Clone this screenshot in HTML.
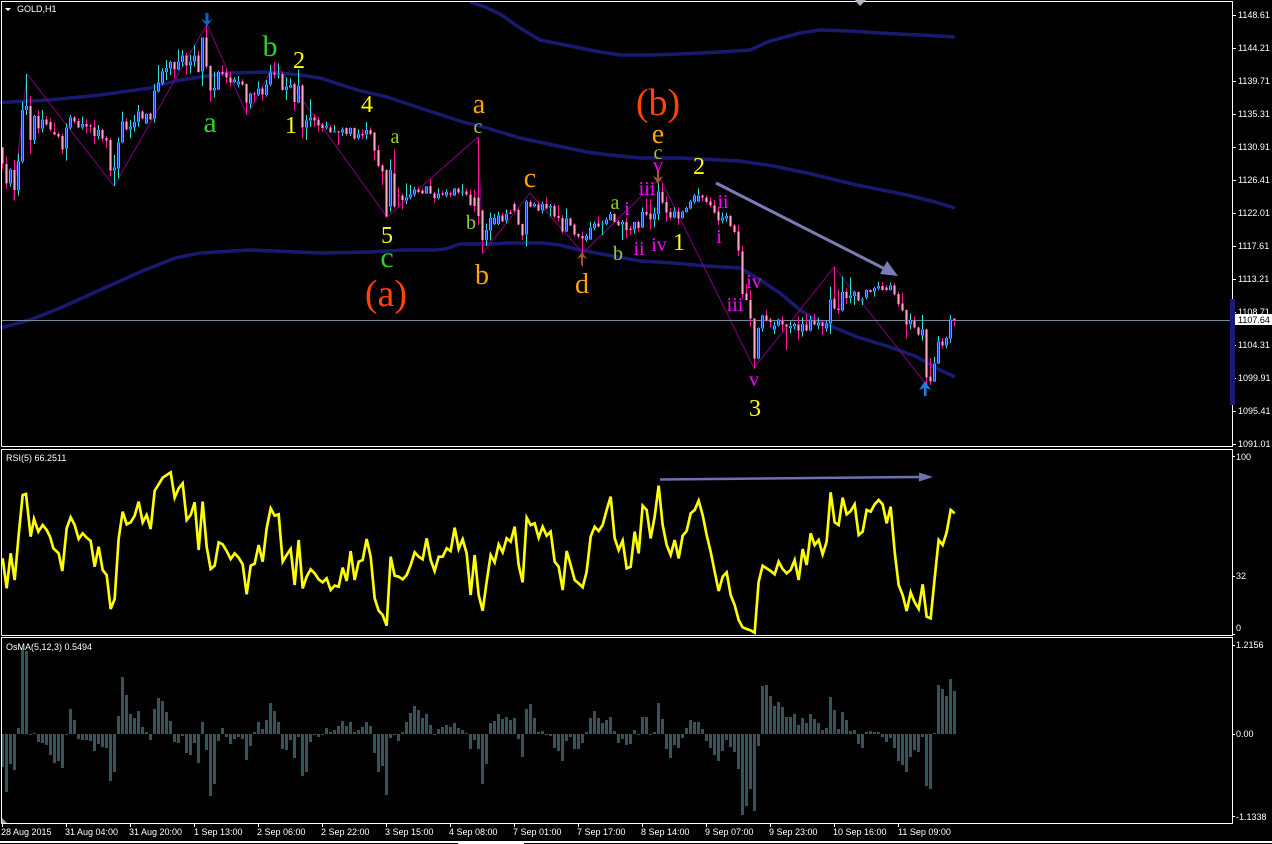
<!DOCTYPE html>
<html><head><meta charset="utf-8"><title>GOLD,H1</title>
<style>html,body{margin:0;padding:0;background:#000;width:1272px;height:844px;overflow:hidden}svg{display:block}
.a{font:9px "Liberation Sans",sans-serif;fill:#fff}
.s{font-family:"Liberation Serif",serif;text-anchor:middle}
</style></head><body>
<svg xmlns="http://www.w3.org/2000/svg" width="1272" height="844" viewBox="0 0 1272 844">
<defs>
<path id="bb1" d="M2.500 442V490M6.500 492V550M14.500 510V570M30.500 318V420M38.500 348V385M46.500 358V373M50.500 366V388M54.500 396V404M58.500 402V410M62.500 408V448M74.500 352V365M78.500 363V382M86.500 372V380M90.500 376V380M94.500 382V408M102.500 390V416M106.500 414V422M110.500 420V512M126.500 364V388M142.500 334V356M150.500 340V358M174.500 186V208M186.500 166V196M198.500 166V216M206.500 112V200M210.500 198V272M222.500 216V222M226.500 218V232M230.500 232V248M242.500 244V254M246.500 252V308M254.500 280V284M262.500 265V284M274.500 218V224M282.500 222V270M294.500 252V306M302.500 256V382M314.500 352V362M318.500 360V376"/>
<path id="ub1" d="M10.500 508V550M18.500 485V570M22.500 330V485M26.500 318V330M34.500 348V420M42.500 358V385M66.500 382V445M70.500 352V382M82.500 372V382M98.500 390V408M114.500 502V512M118.500 428V505M122.500 364V428M130.500 380V388M134.500 366V382M138.500 334V366M146.500 342V370M154.500 272V356M158.500 248V275M162.500 214V250M166.500 204V216M170.500 186V206M178.500 184V208M182.500 166V186M190.500 184V196M194.500 166V184M202.500 112V214M214.500 264V272M218.500 216V268M234.500 238V246M238.500 244V254M250.500 280V310M258.500 265V284M266.500 254V285M270.500 218V254M278.500 220V224M286.500 260V270M290.500 255V262M298.500 258V308M306.500 362V382M310.500 352V362"/>
<path id="bb2" d="M322.500 104V114M330.500 112V127M338.500 124V128M346.500 114V132M354.500 114V146M362.500 132V136M370.500 120V132M374.500 128V182M378.500 180V228M382.500 226V244M386.500 240V380M394.500 250V350M398.500 316V318M402.500 316V330M418.500 298V306M422.500 302V310M430.500 288V310M434.500 310V324M442.500 310V314M450.500 310V314M458.500 296V308M466.500 304V314M470.500 314V345M474.500 322V348M478.500 322V378M482.500 362V450M502.500 376V394M510.500 368V372M514.500 342V362M518.500 360V404M522.500 402V436M530.500 336V350M538.500 344V362M546.500 342V356M554.500 348V380M558.500 378V384M562.500 384V424M570.500 386V406M574.500 404V434M578.500 432V440M582.500 438V446M598.500 400V410M614.500 372V396M618.500 394V406M626.500 396V420M630.500 416V420M638.500 396V414"/>
<path id="ub2" d="M326.500 108V112M334.500 124V128M342.500 118V128M350.500 114V132M358.500 132V144M366.500 120V134M390.500 240V350M406.500 322V332M410.500 314V322M414.500 298V314M426.500 290V310M438.500 310V324M446.500 306V316M454.500 296V316M462.500 304V308M486.500 420V450M490.500 384V422M494.500 384V402M498.500 376V402M506.500 372V392M526.500 334V434M534.500 342V350M542.500 342V362M550.500 348V352M566.500 386V424M586.500 438V450M590.500 412V448M594.500 400V414M602.500 400V404M606.500 388V402M610.500 372V390M622.500 396V404M634.500 396V418"/>
<path id="bb3" d="M646.500 366V374M650.500 370V388M662.500 306V338M666.500 336V368M670.500 366V382M678.500 364V386M702.500 316V322M706.500 322V336M710.500 334V346M714.500 346V368M718.500 364V392M730.500 378V408M734.500 406V426M738.500 424V482M742.500 484V612M746.500 610V630M750.500 630V686M754.500 686V806M766.500 676V692M770.500 688V696M782.500 692V704M786.500 704V710M798.500 704V722M806.500 704V722M814.500 690V704M822.500 698V708M834.500 626V656M838.500 656V660M846.500 606V624M858.500 606V632M870.500 600V606M882.500 588V600M886.500 592V600M894.500 586V614M898.500 612V642M902.500 640V662M906.500 660V704M914.500 690V712M918.500 712V734M926.500 718V862M930.500 860V874M942.500 754V766M954.500 686V690"/>
<path id="ub3" d="M642.500 366V412M654.500 370V388M658.500 304V372M674.500 364V382M682.500 364V384M686.500 354V366M690.500 334V356M694.500 316V336M698.500 316V334M722.500 382V392M726.500 378V386M758.500 714V806M762.500 676V716M774.500 706V718M778.500 688V706M790.500 708V714M794.500 702V710M802.500 702V724M810.500 688V722M818.500 698V706M826.500 700V716M830.500 628V700M842.500 606V662M850.500 616V624M854.500 606V618M862.500 628V632M866.500 600V622M874.500 594V604M878.500 588V596M890.500 586V600M910.500 690V704M922.500 718V736M934.500 820V874M938.500 754V820M946.500 744V766M950.500 688V746"/>
</defs>
<rect width="1272" height="844" fill="#000"/>
<g fill="none" stroke="#191970" stroke-width="3.5">
<path d="M470 2 485 7 500 14 520 28 540 40 560 44 580 48 600 52 620 55 650 55 680 54 720 52 750 50 770 41 800 33 820 30 850 31 880 33 920 35 955 37"/>
<path d="M0 102.500 50 100 100 95 150 88 175 81 200 77 230 73 270 72 300 75 320 78 357 90 387 97 420 108 463 122 487 128 520 138 553 145 587 152 610 155 640 158 680 158 740 161 773 166 807 173 857 185 907 195 935 202 955 208"/>
<path d="M0 328 30 320 60 308 100 290 140 272 175 258 200 253 250 250 320 253 370 252 403 250 435 250 445 249 460 244 493 244 510 243 543 243 560 245 580 250 607 255 640 261 673 263 707 266 740 268 757 278 780 293 800 310 815 319 833 327 857 337 890 347 917 357 940 370 955 377"/>
</g>
<path fill="none" stroke="#800080" stroke-width="1" d="M13 200 27 74 114 186 207 24 247 115 275 63 323 128 387 217 478 137 483 253 530 193 583 253 660 178 754 368 834 267 925 383"/>
<path stroke="#778899" stroke-width="1" shape-rendering="crispEdges" d="M2 320.500H1232"/>
<g shape-rendering="crispEdges" fill="none">
<g transform="scale(1 .33333)">
<path stroke="#ff1493" d="M2.500 442V507M6.500 470V567M14.500 480V602M30.500 288V462M38.500 330V400M46.500 348V378M50.500 355V395M54.500 368V405M58.500 396V415M62.500 400V462M74.500 348V370M78.500 355V385M86.500 358V400M90.500 372V400M94.500 360V432M102.500 385V425M106.500 408V445M110.500 415V530M126.500 355V392M142.500 330V358M150.500 338V360M174.500 184V235M186.500 158V225M198.500 152V218M206.500 75V205M210.500 195V305M222.500 195V228M226.500 205V250M230.500 215V260M242.500 238V258M246.500 250V342M254.500 275V308M262.500 258V302M274.500 186V235M282.500 215V272M294.500 248V332M302.500 252V415M314.500 342V380M318.500 350V395"/>
<path stroke="#30e0d0" d="M10.500 505V560M18.500 460V587M22.500 305V490M26.500 222V345M34.500 345V432M42.500 330V397M66.500 370V482M70.500 345V388M82.500 350V388M98.500 375V418M114.500 465V558M118.500 412V535M122.500 335V430M130.500 360V415M134.500 345V395M138.500 315V380M146.500 340V372M154.500 252V368M158.500 195V278M162.500 205V255M166.500 180V240M170.500 182V225M178.500 148V212M182.500 150V200M190.500 165V220M194.500 135V200M202.500 112V258M214.500 215V292M218.500 212V270M234.500 232V250M238.500 228V262M250.500 278V325M258.500 245V288M266.500 240V290M270.500 195V258M278.500 190V235M286.500 232V300M290.500 235V265M298.500 208V310M306.500 345V420M310.500 298V380"/>
<use href="#bb1" stroke="#ff1e8c" stroke-width="3"/>
<use href="#bb1" stroke="#ffa8c4" stroke-width="1"/>
<use href="#ub1" stroke="#10d0f0" stroke-width="3"/>
<use href="#ub1" stroke="#1040f0" stroke-width="1"/>
</g>
<g transform="translate(0 90) scale(1 .33333)">
<path stroke="#ff1493" d="M322.500 98V125M330.500 105V128M338.500 122V165M346.500 112V138M354.500 112V150M362.500 118V148M370.500 112V135M374.500 125V212M378.500 165V232M382.500 222V285M386.500 238V382M394.500 178V355M398.500 292V352M402.500 310V358M418.500 290V310M422.500 295V312M430.500 268V312M434.500 305V338M442.500 302V318M450.500 305V322M458.500 292V312M466.500 296V318M470.500 298V350M474.500 300V365M478.500 142V405M482.500 358V490M502.500 368V396M510.500 358V372M514.500 335V368M518.500 355V405M522.500 400V450M530.500 330V352M538.500 335V365M546.500 322V358M554.500 342V385M558.500 345V395M562.500 375V430M570.500 382V408M574.500 400V440M578.500 430V445M582.500 425V530M598.500 380V412M614.500 368V398M618.500 390V408M626.500 384V445M630.500 408V435M638.500 392V425"/>
<path stroke="#30e0d0" d="M326.500 95V118M334.500 105V128M342.500 112V138M350.500 112V138M358.500 118V148M366.500 96V148M390.500 208V365M406.500 280V342M410.500 285V328M414.500 290V320M426.500 288V312M438.500 295V328M446.500 298V322M454.500 294V318M462.500 282V318M486.500 400V468M490.500 368V452M494.500 372V405M498.500 365V405M506.500 358V400M526.500 330V470M534.500 338V352M542.500 335V370M550.500 342V380M566.500 355V426M586.500 432V455M590.500 395V450M594.500 395V420M602.500 392V435M606.500 382V405M610.500 365V392M622.500 390V450M634.500 395V430"/>
<use href="#bb2" stroke="#ff1e8c" stroke-width="3"/>
<use href="#bb2" stroke="#ffa8c4" stroke-width="1"/>
<use href="#ub2" stroke="#10d0f0" stroke-width="3"/>
<use href="#ub2" stroke="#1040f0" stroke-width="1"/>
<path stroke="#ff1493" d="M646.500 325V378M650.500 328V418M662.500 280V342M666.500 320V395M670.500 355V390M678.500 352V405M702.500 314V334M706.500 316V340M710.500 322V352M714.500 330V372M718.500 350V405M730.500 375V412M734.500 402V430M738.500 405V498M742.500 468V625M746.500 582V632M750.500 600V710M754.500 684V836M766.500 662V695M770.500 684V712M782.500 680V725M786.500 702V780M798.500 680V750M806.500 672V724M814.500 672V706M822.500 690V735M834.500 530V660M838.500 598V672M846.500 595V642M858.500 604V634M870.500 598V608M882.500 576V602M886.500 585V605M894.500 580V616M898.500 605V650M902.500 608V665M906.500 658V745M914.500 680V716M918.500 710V738M926.500 715V888M930.500 805V885M942.500 744V775M954.500 685V708"/>
<path stroke="#30e0d0" d="M642.500 352V414M654.500 352V412M658.500 250V390M674.500 352V385M682.500 362V386M686.500 350V368M690.500 330V358M694.500 312V340M698.500 295V336M722.500 368V400M726.500 368V395M758.500 712V808M762.500 674V725M774.500 695V732M778.500 686V710M790.500 695V730M794.500 698V718M802.500 682V740M810.500 678V724M818.500 682V718M826.500 692V725M830.500 590V732M842.500 560V665M850.500 562V640M854.500 602V645M862.500 622V645M866.500 598V628M874.500 590V620M878.500 575V600M890.500 578V602M910.500 670V718M922.500 675V752M934.500 800V876M938.500 738V822M946.500 740V775M950.500 675V758"/>
<use href="#bb3" stroke="#ff1e8c" stroke-width="3"/>
<use href="#bb3" stroke="#ffa8c4" stroke-width="1"/>
<use href="#ub3" stroke="#10d0f0" stroke-width="3"/>
<use href="#ub3" stroke="#1040f0" stroke-width="1"/>
</g>
</g>
<polyline fill="none" stroke="#7b7bb8" stroke-width="3" points="716 183 885 269"/>
<polygon fill="#7b7bb8" points="898 276 880 274 887 261"/>
<polygon fill="#0a64c8" points="205.500 13 208.500 13 208.500 21 212.500 19 207 26 201 19 205.500 21"/>
<polygon fill="#a0522d" points="581 265 583 265 583 257 587 259 582 252 577 259 581 257"/>
<polygon fill="#a0522d" points="657 171 659 171 659 178 663 176 658 184 653 176 657 178"/>
<polygon fill="#1e80e0" points="924 396 926.500 396 926.500 388 931 390 925 381 919 390 924 388"/>
<g class="s">
<text x="210" y="132" font-size="30" fill="#32cd32">a</text>
<text x="270" y="56" font-size="30" fill="#32cd32">b</text>
<text x="387" y="267" font-size="30" fill="#32cd32">c</text>
<g font-size="24" fill="#ffff00">
<text x="299" y="68">2</text><text x="291" y="133">1</text><text x="367" y="112">4</text><text x="387" y="243">5</text><text x="699" y="174">2</text><text x="679" y="250">1</text><text x="755" y="416">3</text>
</g>
<g font-size="20" fill="#9acd32">
<text x="395" y="143">a</text><text x="478" y="133">c</text><text x="471" y="229">b</text><text x="615" y="209">a</text><text x="618" y="260">b</text><text x="658" y="159">c</text>
</g>
<g font-size="28" fill="#ffa500">
<text x="479" y="113">a</text><text x="482" y="284">b</text><text x="530" y="187">c</text><text x="582" y="293">d</text><text x="658" y="143">e</text>
</g>
<g font-size="38" fill="#ff4500">
<text x="386" y="306">(a)</text><text x="658" y="115">(b)</text>
</g>
<g font-size="20" fill="#ff00ff">
<text x="658" y="172">v</text><text x="647" y="195">iii</text><text x="627" y="215">i</text><text x="639" y="255">ii</text><text x="659" y="251">iv</text><text x="723" y="208">ii</text><text x="719" y="243">i</text><text x="754" y="288">iv</text><text x="735" y="311">iii</text><text x="754" y="386">v</text>
</g>
</g>
<g transform="translate(0 445) scale(.33333)">
<polyline fill="none" stroke="#ffff00" stroke-width="8" stroke-linejoin="miter" points="8,340 20,430 32,325 44,405 56,270 68,150 78,147 92,275 102,222 115,260 128,240 140,255 150,275 160,310 176,325 187,378 200,250 212,217 224,240 236,282 248,265 260,278 272,288 284,365 296,305 308,375 320,390 332,492 344,462 356,280 368,200 380,238 392,232 404,212 416,170 428,232 440,210 452,252 464,137 476,118 488,98 500,90 512,82 524,158 536,130 548,115 560,225 572,210 584,172 596,315 608,170 620,305 632,372 644,362 656,292 668,298 680,318 692,342 704,325 716,338 728,358 740,448 752,362 764,356 776,300 788,350 800,250 812,190 824,212 836,208 848,350 860,330 872,312 884,420 896,285 908,430 920,395 932,373 944,385 956,403 968,412 980,400 992,435 1004,422 1016,425 1028,368 1040,408 1052,318 1064,405 1076,350 1088,345 1100,282 1112,335 1124,460 1136,497 1148,510 1160,542 1172,335 1184,392 1196,395 1208,403 1220,390 1232,360 1244,322 1256,335 1268,343 1280,280 1292,345 1304,378 1316,335 1328,335 1340,310 1352,318 1364,248 1376,312 1388,283 1400,325 1412,450 1424,330 1436,450 1448,497 1460,410 1472,330 1484,352 1496,298 1508,322 1520,280 1532,290 1544,245 1556,360 1568,412 1580,218 1592,240 1604,235 1616,278 1628,245 1640,272 1652,260 1664,350 1676,365 1688,435 1700,318 1712,360 1724,405 1736,415 1748,427 1760,380 1772,275 1784,245 1796,258 1808,240 1820,195 1832,155 1844,280 1856,315 1868,287 1880,370 1892,365 1904,260 1916,325 1928,182 1940,195 1952,280 1964,215 1976,122 1988,240 2000,300 2012,330 2024,285 2036,340 2048,272 2060,258 2072,205 2084,195 2096,167 2108,210 2120,270 2132,320 2144,380 2156,438 2168,395 2180,382 2192,450 2204,480 2216,525 2228,547 2240,552 2252,556 2264,563 2276,410 2288,362 2300,370 2312,378 2324,388 2336,350 2348,372 2360,385 2372,375 2384,345 2396,405 2408,312 2420,360 2432,265 2444,300 2456,285 2468,328 2480,290 2492,142 2504,232 2516,240 2528,158 2540,208 2552,198 2564,178 2576,270 2588,260 2600,195 2612,200 2624,178 2636,165 2648,178 2660,235 2672,185 2684,320 2696,420 2708,450 2720,498 2732,442 2744,472 2756,492 2768,418 2780,515 2792,520 2804,400 2816,285 2828,300 2840,262 2852,195 2864,205"/>
</g>
<polyline fill="none" stroke="#7070b0" stroke-width="2.500" points="660 479.500 921 477"/>
<polygon fill="#7070b0" points="933 477 919 472.500 919 481.500"/>
<path shape-rendering="crispEdges" fill="none" stroke="#345457" stroke-width="3" d="M2.500 734v33M6.500 734v58M10.500 734v30M14.500 734v36M18.500 734v-6M22.500 734v-86M26.500 734v-83M30.500 734v1M34.500 734v-1M38.500 734v8M42.500 734v9M46.500 734v11M50.500 734v21M54.500 734v29M58.500 734v27M62.500 734v34M66.500 734v1M70.500 734v-25M74.500 734v-14M78.500 734v5M82.500 734v6M86.500 734v6M90.500 734v7M94.500 734v17M98.500 734v10M102.500 734v13M106.500 734v14M110.500 734v47M114.500 734v38M118.500 734v-18M122.500 734v-57M126.500 734v-39M130.500 734v-20M134.500 734v-16M138.500 734v-23M142.500 734v-7M146.500 734v-2M150.500 734v6M154.500 734v-25M158.500 734v-36M162.500 734v-33M166.500 734v-22M170.500 734v-13M174.500 734v8M178.500 734v9M182.500 734v2M186.500 734v19M190.500 734v21M194.500 734v9M198.500 734v29M202.500 734v-12M206.500 734v16M210.500 734v62M214.500 734v50M218.500 734v7M222.500 734v-6M226.500 734v3M230.500 734v10M234.500 734v5M238.500 734v3M242.500 734v5M246.500 734v26M250.500 734v12M254.500 734v-2M258.500 734v-12M262.500 734v-5M266.500 734v-14M270.500 734v-31M274.500 734v-23M278.500 734v-12M282.500 734v15M286.500 734v16M290.500 734v6M294.500 734v24M298.500 734v3M302.500 734v42M306.500 734v38M310.500 734v8M314.500 734v1M318.500 734v3M322.500 734v1M326.500 734v-6M330.500 734v-2M334.500 734v-4M338.500 734v-8M342.500 734v-13M346.500 734v-8M350.500 734v-12M354.500 734v-2M358.500 734v-4M362.500 734v-7M366.500 734v-12M370.500 734v-8M374.500 734v19M378.500 734v38M382.500 734v32M386.500 734v61M390.500 734v4M394.500 734v1M398.500 734v7M402.500 734v-2M406.500 734v-12M410.500 734v-21M414.500 734v-28M418.500 734v-24M422.500 734v-16M426.500 734v-20M430.500 734v-9M434.500 734v1M438.500 734v-5M442.500 734v-7M446.500 734v-9M450.500 734v-7M454.500 734v-11M458.500 734v-6M462.500 734v-4M466.500 734v-1M470.500 734v15M474.500 734v6M478.500 734v15M482.500 734v50M486.500 734v30M490.500 734v-11M494.500 734v-13M498.500 734v-20M502.500 734v-15M506.500 734v-17M510.500 734v-14M514.500 734v-16M518.500 734v5M522.500 734v23M526.500 734v-25M530.500 734v-30M534.500 734v-16M538.500 734v-2M542.500 734v-3M546.500 734v1M550.500 734v2M554.500 734v14M558.500 734v17M562.500 734v27M566.500 734v7M570.500 734v3M574.500 734v15M578.500 734v15M582.500 734v9M586.500 734v-2M590.500 734v-16M594.500 734v-23M598.500 734v-16M602.500 734v-11M606.500 734v-14M610.500 734v-17M614.500 734v-3M618.500 734v9M622.500 734v5M626.500 734v11M630.500 734v10M634.500 734v-4M638.500 734v1M642.500 734v-17M646.500 734v-17M650.500 734v1M654.500 734v-2M658.500 734v-31M662.500 734v-15M666.500 734v15M670.500 734v24M674.500 734v11M678.500 734v14M682.500 734v4M686.500 734v-6M690.500 734v-14M694.500 734v-12M698.500 734v-12M702.500 734v-5M706.500 734v7M710.500 734v14M714.500 734v21M718.500 734v27M722.500 734v17M726.500 734v6M730.500 734v13M734.500 734v18M738.500 734v35M742.500 734v81M746.500 734v72M750.500 734v55M754.500 734v77M758.500 734v12M762.500 734v-48M766.500 734v-49M770.500 734v-38M774.500 734v-28M778.500 734v-32M782.500 734v-27M786.500 734v-17M790.500 734v-17M794.500 734v-20M798.500 734v-9M802.500 734v-16M806.500 734v-11M810.500 734v-20M814.500 734v-15M818.500 734v-11M822.500 734v-4M826.500 734v-6M830.500 734v-37M834.500 734v-24M838.500 734v-5M842.500 734v-22M846.500 734v-14M850.500 734v-3M854.500 734v-4M858.500 734v10M862.500 734v14M866.500 734v-2M870.500 734v-3M874.500 734v-2M878.500 734v-2M882.500 734v3M886.500 734v8M890.500 734v4M894.500 734v14M898.500 734v27M902.500 734v31M906.500 734v38M910.500 734v23M914.500 734v16M918.500 734v18M922.500 734v3M926.500 734v52M930.500 734v55M934.500 734v-1M938.500 734v-49M942.500 734v-45M946.500 734v-38M950.500 734v-55M954.500 734v-43"/>
<g shape-rendering="crispEdges" fill="none" stroke="#fff" stroke-width="1">
<path d="M1.500 446.500V1.500H1232.500V446.500H1.500"/>
<path d="M1.500 635.500V449.500H1232.500V635.500H1.500"/>
<path d="M1.500 823.500V637.500H1232.500V823.500H1.500"/>
<path d="M0 842H1272" stroke-width="2"/>
<path d="M1233 15.500h3M1233 48.500h3M1233 81.500h3M1233 114.500h3M1233 147.500h3M1233 180.500h3M1233 213.500h3M1233 246.500h3M1233 279.500h3M1233 312.500h3M1233 345.500h3M1233 378.500h3M1233 411.500h3M1233 444.500h3M1233 456.500h2M1233 576.500h2M1233 634.500h2M1233 645.500h2M1233 734.500h2M1233 816.500h2"/>
<path d="M2.500 824v3M66.500 824v3M130.500 824v3M194.500 824v3M258.500 824v3M322.500 824v3M386.500 824v3M450.500 824v3M514.500 824v3M578.500 824v3M642.500 824v3M706.500 824v3M770.500 824v3M834.500 824v3M898.500 824v3"/>
</g>
<rect x="458" y="842" width="66" height="2" fill="#fff"/>
<rect x="1230" y="299" width="5" height="106" fill="#1a1a78"/>
<polygon fill="#fff" points="5,8 11,8 8,11"/>
<polygon fill="#b0b8c4" points="855,0 866,0 860,6"/>
<polygon fill="#8fa0b0" points="2,818 2,823 7,823"/>
<g class="a">
<text x="17" y="12">GOLD,H1</text>
<text x="6" y="461">RSI(5) 66.2511</text>
<text x="6" y="650">OsMA(5,12,3) 0.5494</text>
<text x="1238" y="18">1148.61</text><text x="1238" y="51">1144.21</text><text x="1238" y="84">1139.71</text><text x="1238" y="117">1135.31</text><text x="1238" y="150">1130.91</text><text x="1238" y="183">1126.41</text><text x="1238" y="216">1122.01</text><text x="1238" y="249">1117.61</text><text x="1238" y="282">1113.21</text><text x="1238" y="315">1108.71</text><text x="1238" y="348">1104.31</text><text x="1238" y="381">1099.91</text><text x="1238" y="414">1095.41</text><text x="1238" y="447">1091.01</text>
<text x="1236" y="460">100</text><text x="1236" y="579">32</text><text x="1236" y="631">0</text>
<text x="1236" y="648">1.2156</text><text x="1236" y="737">0.00</text><text x="1236" y="820">-1.1338</text>
<text x="1" y="835">28 Aug 2015</text><text x="65" y="835">31 Aug 04:00</text><text x="129" y="835">31 Aug 20:00</text><text x="194" y="835">1 Sep 13:00</text><text x="257" y="835">2 Sep 06:00</text><text x="321" y="835">2 Sep 22:00</text><text x="385" y="835">3 Sep 15:00</text><text x="449" y="835">4 Sep 08:00</text><text x="513" y="835">7 Sep 01:00</text><text x="577" y="835">7 Sep 17:00</text><text x="641" y="835">8 Sep 14:00</text><text x="705" y="835">9 Sep 07:00</text><text x="769" y="835">9 Sep 23:00</text><text x="833" y="835">10 Sep 16:00</text><text x="898" y="835">11 Sep 09:00</text>
</g>
<rect x="1235" y="314" width="37" height="11" fill="#fff"/>
<text class="a" x="1238" y="323" style="fill:#000">1107.64</text>
</svg>
</body></html>
